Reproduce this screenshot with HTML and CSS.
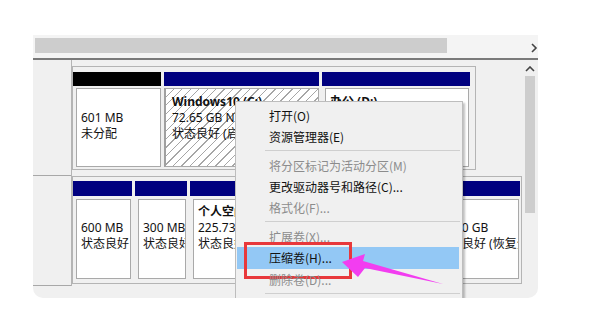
FILE: index.html
```html
<!DOCTYPE html>
<html lang="zh-CN">
<head>
    <meta charset="UTF-8">
    <title>磁盘管理</title>
    <link rel="stylesheet" href="styles.css">
</head>
<body>
    <div class="window">
        <div class="topbar">
            <div class="hthumb"></div>
            <svg class="chev" width="8" height="10" viewBox="0 0 8 10"><polyline points="2,1 6,5 2,9" fill="none" stroke="#444" stroke-width="1.6"/></svg>
        </div>

        <div class="view">
            <div class="disks">
                <div class="disk disk-1">
                    <div class="disk-label"></div>
                    <div class="disk-main">
                        <div class="frame">
                            <div class="part p-601">
                                <div class="part-head black"></div>
                                <div class="part-body">
                                    <div>&nbsp;</div>
                                    <div>601 MB</div>
                                    <div>未分配</div>
                                </div>
                            </div>
                            <div class="part p-sys">
                                <div class="part-head"></div>
                                <div class="part-body hatch">
                                    <div class="title">Windows10 (C:)</div>
                                    <div>72.65 GB NTFS</div>
                                    <div>状态良好 (启动, 页面文件, 故障转储, 基本数据分区)</div>
                                </div>
                            </div>
                            <div class="part p-work">
                                <div class="part-head"></div>
                                <div class="part-body">
                                    <div class="title">办公 (D:)</div>
                                    <div>80.00 GB NTFS</div>
                                    <div>状态良好 (基本数据分区)</div>
                                </div>
                            </div>
                        </div>
                    </div>
                </div>

                <div class="disk disk-2">
                    <div class="disk-label"></div>
                    <div class="disk-main">
                        <div class="frame">
                            <div class="part p-efi">
                                <div class="part-head"></div>
                                <div class="part-body">
                                    <div>&nbsp;</div>
                                    <div>600 MB</div>
                                    <div>状态良好 (EFI 系统分区)</div>
                                </div>
                            </div>
                            <div class="part p-oem">
                                <div class="part-head"></div>
                                <div class="part-body">
                                    <div>&nbsp;</div>
                                    <div>300 MB</div>
                                    <div>状态良好 (OEM 分区)</div>
                                </div>
                            </div>
                            <div class="part p-home">
                                <div class="part-head"></div>
                                <div class="part-body">
                                    <div class="title">个人空间 (E:)</div>
                                    <div>225.73 GB NTFS</div>
                                    <div>状态良好 (基本数据分区)</div>
                                </div>
                            </div>
                            <div class="part p-rec">
                                <div class="part-head"></div>
                                <div class="part-body">
                                    <div>&nbsp;</div>
                                    <div>20.00 GB</div>
                                    <div>状态良好 (恢复分区)</div>
                                </div>
                            </div>
                        </div>
                    </div>
                </div>
            </div>

            <div class="vscroll">
                <svg class="up" width="10" height="6" viewBox="0 0 10 6"><polyline points="1,5 5,1 9,5" fill="none" stroke="#444" stroke-width="1.6"/></svg>
                <div class="vthumb"></div>
            </div>
        </div>

        <div class="menu">
            <div class="item">打开(O)</div>
            <div class="item">资源管理器(E)</div>
            <div class="sep"></div>
            <div class="item disabled">将分区标记为活动分区(M)</div>
            <div class="item">更改驱动器号和路径(C)...</div>
            <div class="item disabled">格式化(F)...</div>
            <div class="sep"></div>
            <div class="item disabled">扩展卷(X)...</div>
            <div class="item active">
                压缩卷(H)...
                <svg class="arrow" width="104" height="32" viewBox="0 0 104 32"><polygon points="1,9 24,1 22,8 102,31 24,15 17,24" fill="#f23df0"/></svg>
            </div>
            <div class="item disabled">删除卷(D)...</div>
            <div class="sep"></div>
            <div class="item">属性(P)</div>
        </div>
    </div>
</body>
</html>
```

FILE: styles.css
```css
* {
    margin: 0;
    padding: 0;
    box-sizing: border-box;
}

body {
    background: #fff;
    font-family: "Noto Sans", "Noto Sans CJK SC", sans-serif;
    font-size: 12px;
    color: #111;
}

.window {
    position: relative;
    width: 505px;
    height: 263px;
    margin: 35px 0 0 33px;
    background: #f0f0f0;
    border-radius: 0 0 10px 10px;
    overflow: hidden;
}

.topbar {
    height: 25px;
    padding: 3px 0 0 2px;
    display: flex;
    align-items: flex-start;
    background: #f4f4f4;
    border-bottom: 2px solid #7a7a7a;
}

.hthumb {
    width: 412px;
    height: 15px;
    background: #cdcdcd;
}

.chev {
    margin: 5px 0 0 83px;
}

.view {
    display: flex;
    height: 236px;
}

.disks {
    flex: 1;
}

.disk {
    display: flex;
}

.disk-1 {
    height: 116px;
}

.disk-2 {
    height: 110px;
}

.disk-label {
    width: 38px;
    border-bottom: 1px solid #a8a8a8;
}

.disk-main {
    flex: 1;
    border-left: 1px solid #b4b4b4;
}

.disk-1 .disk-main {
    padding-top: 6px;
}

.frame {
    display: inline-flex;
    gap: 3px;
    border: 1px solid #b4b4b4;
    background: #f0f0f0;
}

.disk-1 .frame {
    padding: 5px 5px 2px 0;
}

.disk-2 .frame {
    padding: 4px 1px 4px 0;
}

.part {
    display: flex;
    flex-direction: column;
    flex: none;
}

.p-601 { width: 88px; }
.p-sys { width: 155px; }
.p-work { width: 148px; }
.p-efi { width: 59px; }
.p-oem { width: 52px; }
.p-home { width: 237px; }
.p-rec { width: 90px; }

.part-head {
    height: 14px;
    background: #00007f;
}

.disk-2 .part-head {
    height: 15px;
}

.part-head.black {
    background: #000;
}

.part-body {
    height: 79px;
    margin: 2px 1px 0 3px;
    padding: 5px 0 0 4px;
    background: #fff;
    border: 1px solid #a9a9a9;
    line-height: 16px;
    white-space: nowrap;
    overflow: hidden;
}

.p-601 .part-body {
    margin-right: 0;
}

.disk-2 .part-body {
    height: 80px;
    margin-top: 3px;
    padding-top: 4px;
}

.part-body.hatch {
    margin: 2px 0 0 0;
    padding-left: 6px;
    border-left: 2px solid #a0a0a0;
    background: repeating-linear-gradient(135deg, #fff 0 5px, #a6a6a6 5px 6px);
}

.title {
    font-weight: bold;
}

.vscroll {
    width: 14px;
    padding: 6px 0 0 1px;
}

.up {
    display: block;
    margin-left: 0;
}

.vthumb {
    width: 10px;
    height: 137px;
    margin-top: 4px;
    background: #cdcdcd;
}

.menu {
    position: absolute;
    left: 202px;
    top: 66px;
    width: 228px;
    padding-top: 3px;
    background: #f0f0f0;
    border: 1px solid #bdbdbd;
    box-shadow: 2px 2px 2px rgba(0, 0, 0, 0.25);
    font-family: "Noto Sans CJK SC", sans-serif;
}

.item {
    position: relative;
    height: 21px;
    line-height: 21px;
    margin: 0 3px 0 1px;
    padding-left: 32px;
    color: #111;
    white-space: nowrap;
}

.item.disabled {
    color: #8c8c8c;
}

.item.active {
    height: 22px;
    line-height: 22px;
    background: #93c8f5;
}

.item.active::after {
    content: "";
    position: absolute;
    left: 7px;
    top: -5px;
    width: 102px;
    height: 31px;
    border: 3px solid #e8383b;
}

.arrow {
    position: absolute;
    left: 104px;
    top: 6px;
    z-index: 2;
}

.sep {
    height: 1px;
    margin: 3px 2px 4px 29px;
    background: #cfcfcf;
}
```
